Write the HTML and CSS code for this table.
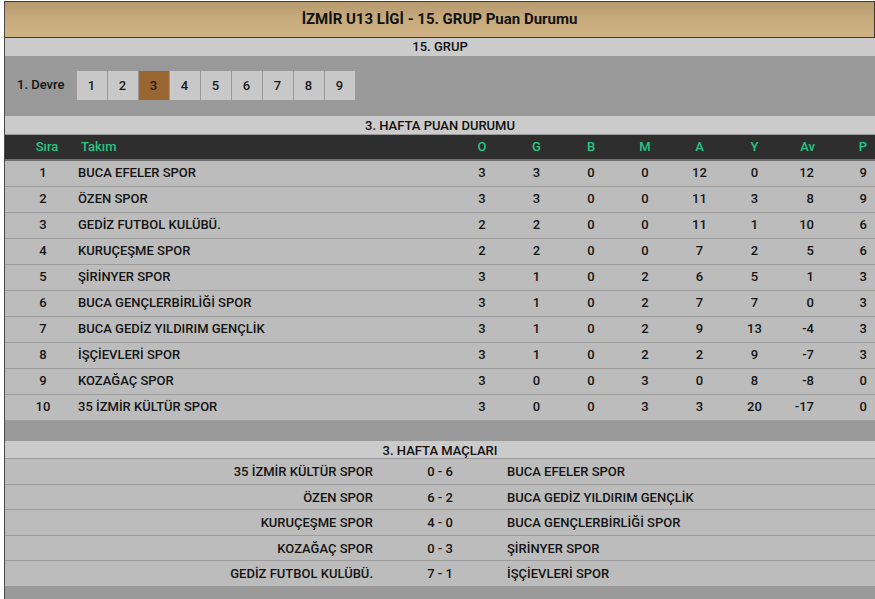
FILE: index.html
```html
<!DOCTYPE html>
<html lang="tr">
<head>
<meta charset="utf-8">
<title>İZMİR U13 LİGİ - 15. GRUP Puan Durumu</title>
<link rel="stylesheet" href="styles.css">
</head>
<body>
<div class="page">
  <div class="title">İZMİR U13 LİGİ - 15. GRUP Puan Durumu</div>
  <div class="band">15. GRUP</div>
  <div class="devre">
    <span class="devre-label">1. Devre</span>
    <div class="weeks">
      <span class="wk">1</span><span class="wk">2</span><span class="wk active">3</span><span class="wk">4</span><span class="wk">5</span><span class="wk">6</span><span class="wk">7</span><span class="wk">8</span><span class="wk">9</span>
    </div>
  </div>
  <div class="band band-low">3. HAFTA PUAN DURUMU</div>
  <div class="standings">
    <div class="row head">
      <span class="c-sira">Sıra</span><span class="c-team">Takım</span><span class="c-n">O</span><span class="c-n">G</span><span class="c-n">B</span><span class="c-n">M</span><span class="c-n">A</span><span class="c-n">Y</span><span class="c-av">Av</span><span class="c-p">P</span>
    </div>
    <div class="row"><span class="c-sira">1</span><span class="c-team">BUCA EFELER SPOR</span><span class="c-n">3</span><span class="c-n">3</span><span class="c-n">0</span><span class="c-n">0</span><span class="c-n">12</span><span class="c-n">0</span><span class="c-av">12</span><span class="c-p">9</span></div>
    <div class="row"><span class="c-sira">2</span><span class="c-team">ÖZEN SPOR</span><span class="c-n">3</span><span class="c-n">3</span><span class="c-n">0</span><span class="c-n">0</span><span class="c-n">11</span><span class="c-n">3</span><span class="c-av">8</span><span class="c-p">9</span></div>
    <div class="row"><span class="c-sira">3</span><span class="c-team">GEDİZ FUTBOL KULÜBÜ.</span><span class="c-n">2</span><span class="c-n">2</span><span class="c-n">0</span><span class="c-n">0</span><span class="c-n">11</span><span class="c-n">1</span><span class="c-av">10</span><span class="c-p">6</span></div>
    <div class="row"><span class="c-sira">4</span><span class="c-team">KURUÇEŞME SPOR</span><span class="c-n">2</span><span class="c-n">2</span><span class="c-n">0</span><span class="c-n">0</span><span class="c-n">7</span><span class="c-n">2</span><span class="c-av">5</span><span class="c-p">6</span></div>
    <div class="row"><span class="c-sira">5</span><span class="c-team">ŞİRİNYER SPOR</span><span class="c-n">3</span><span class="c-n">1</span><span class="c-n">0</span><span class="c-n">2</span><span class="c-n">6</span><span class="c-n">5</span><span class="c-av">1</span><span class="c-p">3</span></div>
    <div class="row"><span class="c-sira">6</span><span class="c-team">BUCA GENÇLERBİRLİĞİ SPOR</span><span class="c-n">3</span><span class="c-n">1</span><span class="c-n">0</span><span class="c-n">2</span><span class="c-n">7</span><span class="c-n">7</span><span class="c-av">0</span><span class="c-p">3</span></div>
    <div class="row"><span class="c-sira">7</span><span class="c-team">BUCA GEDİZ YILDIRIM GENÇLİK</span><span class="c-n">3</span><span class="c-n">1</span><span class="c-n">0</span><span class="c-n">2</span><span class="c-n">9</span><span class="c-n">13</span><span class="c-av">-4</span><span class="c-p">3</span></div>
    <div class="row"><span class="c-sira">8</span><span class="c-team">İŞÇİEVLERİ SPOR</span><span class="c-n">3</span><span class="c-n">1</span><span class="c-n">0</span><span class="c-n">2</span><span class="c-n">2</span><span class="c-n">9</span><span class="c-av">-7</span><span class="c-p">3</span></div>
    <div class="row"><span class="c-sira">9</span><span class="c-team">KOZAĞAÇ SPOR</span><span class="c-n">3</span><span class="c-n">0</span><span class="c-n">0</span><span class="c-n">3</span><span class="c-n">0</span><span class="c-n">8</span><span class="c-av">-8</span><span class="c-p">0</span></div>
    <div class="row"><span class="c-sira">10</span><span class="c-team">35 İZMİR KÜLTÜR SPOR</span><span class="c-n">3</span><span class="c-n">0</span><span class="c-n">0</span><span class="c-n">3</span><span class="c-n">3</span><span class="c-n">20</span><span class="c-av">-17</span><span class="c-p">0</span></div>
  </div>
  <div class="spacer"></div>
  <div class="band band-match">3. HAFTA MAÇLARI</div>
  <div class="matches">
    <div class="match"><span class="home">35 İZMİR KÜLTÜR SPOR</span><span class="score">0 - 6</span><span class="away">BUCA EFELER SPOR</span></div>
    <div class="match"><span class="home">ÖZEN SPOR</span><span class="score">6 - 2</span><span class="away">BUCA GEDİZ YILDIRIM GENÇLİK</span></div>
    <div class="match"><span class="home">KURUÇEŞME SPOR</span><span class="score">4 - 0</span><span class="away">BUCA GENÇLERBİRLİĞİ SPOR</span></div>
    <div class="match"><span class="home">KOZAĞAÇ SPOR</span><span class="score">0 - 3</span><span class="away">ŞİRİNYER SPOR</span></div>
    <div class="match"><span class="home">GEDİZ FUTBOL KULÜBÜ.</span><span class="score">7 - 1</span><span class="away">İŞÇİEVLERİ SPOR</span></div>
  </div>
  <div class="bottom"></div>
</div>
</body>
</html>
```
FILE: styles.css
```css
html, body {
  margin: 0;
  padding: 0;
  background: #ffffff;
  overflow: hidden;
}
body {
  font-family: Roboto, "Liberation Sans", Arial, sans-serif;
  font-size: 13px;
  font-weight: 500;
  color: #141414;
}
.page {
  margin: 1px 0 0 4px;
  border-left: 1px solid #4a4a4a;
  background: #999999;
  min-height: 598px;
}
.title {
  height: 35px;
  line-height: 35px;
  text-align: center;
  font-size: 15px;
  font-weight: 700;
  color: #111;
  border-top: 1px solid #3a3a3a;
  border-bottom: 1px solid #3a3a3a;
  border-right: 1px solid #3a3a3a;
  background: linear-gradient(to bottom, #b69a6d 0%, #c6aa7c 45%, #cfb385 100%);
}
.band {
  height: 18px;
  line-height: 18px;
  text-align: center;
  background: #cbcbcb;
  color: #111;
}
.band-low {
  line-height: 20px;
}
.band-match {
  height: 17px;
  line-height: 19px;
}
.devre {
  height: 60px;
  background: #999999;
  display: flex;
  align-items: center;
  padding-left: 12px;
  gap: 12px;
}
.devre-label {
  color: #141414;
  margin-top: -3px;
}
.weeks {
  display: flex;
  gap: 1px;
  margin-top: -1px;
}
.wk {
  width: 30px;
  height: 29px;
  line-height: 29px;
  text-align: center;
  background: #c8c8c8;
  color: #1a1a1a;
}
.wk.active {
  background: #9a6632;
}
.standings {
  border-top: 1px solid #9a9a9a;
}
.row {
  display: grid;
  grid-template-columns: 70px 380px 54px 55px 54px 54px 55px 55px 54px 1fr;
  height: 25px;
  line-height: 24.5px;
  background: #bcbcbc;
  border-bottom: 1px solid #9c9c9c;
}
.row.head {
  background: #2e2e2e;
  color: #27c484;
  height: 24px;
  line-height: 24px;
  border-bottom: 2px solid #6e6e6e;
}
.c-sira {
  text-align: center;
  padding-left: 6px;
}
.head .c-sira {
  padding-left: 14px;
}
.c-team {
  padding-left: 3px;
}
.head .c-team {
  padding-left: 6px;
}
.c-n {
  text-align: center;
}
.c-av {
  text-align: right;
  padding-right: 22px;
}
.head .c-av {
  padding-right: 21px;
}
.c-p {
  text-align: right;
  padding-right: 8px;
}
.spacer {
  height: 20px;
  background: #999999;
}
.matches .match {
  display: grid;
  grid-template-columns: 370px 130px 1fr;
  height: 24.5px;
  line-height: 26px;
  background: #bcbcbc;
  border-top: 1px solid #9c9c9c;
}
.home {
  text-align: right;
  padding-right: 2px;
}
.score {
  text-align: center;
}
.away {
  padding-left: 2px;
}
.bottom {
  height: 12px;
  border-top: 1px solid #9c9c9c;
  background: #999999;
}
```
